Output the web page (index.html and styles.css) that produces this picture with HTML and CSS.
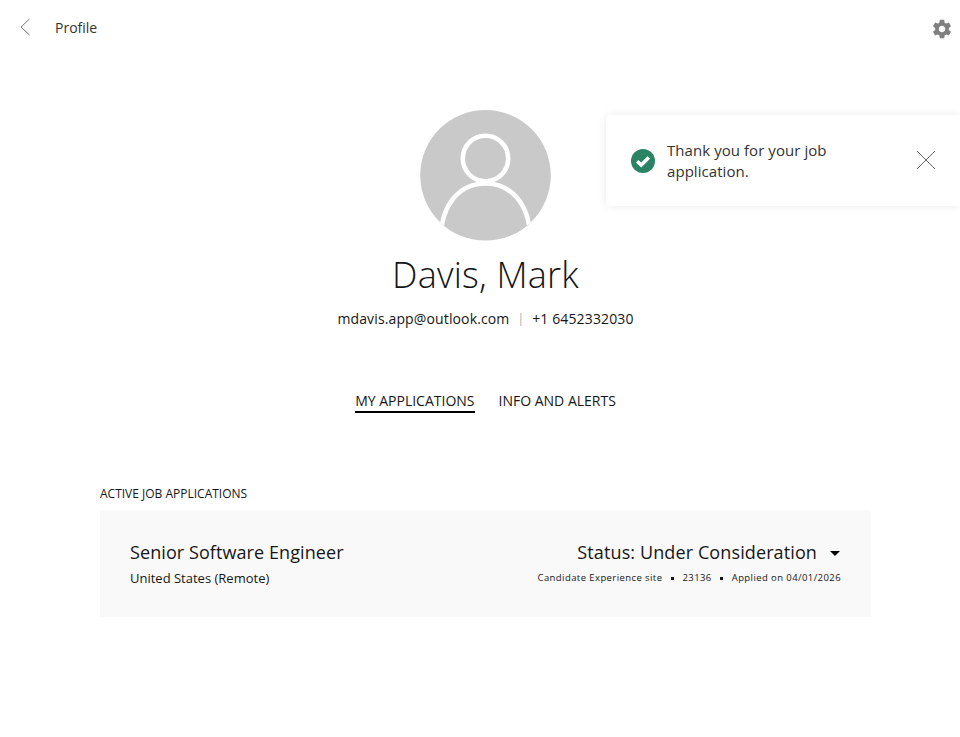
FILE: index.html
```html
<!DOCTYPE html>
<html lang="en">
<head>
<meta charset="utf-8">
<title>Profile</title>
<link rel="stylesheet" href="styles.css">
</head>
<body>
<header class="topbar">
  <div class="topbar-left">
    <svg class="back" width="12" height="18" viewBox="0 0 12 18"><path d="M10.5 1 L2 9 L10.5 17" fill="none" stroke="#777" stroke-width="1"/></svg>
    <span class="topbar-title">Profile</span>
  </div>
  <svg class="gear" width="22" height="22" viewBox="0 0 24 24"><path fill="#808080" d="M19.43 12.98c.04-.32.07-.64.07-.98s-.03-.66-.07-.98l2.11-1.65c.19-.15.24-.42.12-.64l-2-3.46c-.12-.22-.39-.3-.61-.22l-2.49 1c-.52-.4-1.08-.73-1.69-.98l-.38-2.65C14.46 2.18 14.25 2 14 2h-4c-.25 0-.46.18-.49.42l-.38 2.65c-.61.25-1.17.59-1.69.98l-2.49-1c-.23-.09-.49 0-.61.22l-2 3.46c-.13.22-.07.49.12.64l2.11 1.65c-.04.32-.07.65-.07.98s.03.66.07.98l-2.11 1.65c-.19.15-.24.42-.12.64l2 3.46c.12.22.39.3.61.22l2.49-1c.52.4 1.08.73 1.69.98l.38 2.65c.03.24.24.42.49.42h4c.25 0 .46-.18.49-.42l.38-2.65c.61-.25 1.17-.59 1.69-.98l2.49 1c.23.09.49 0 .61-.22l2-3.46c.12-.22.07-.49-.12-.64l-2.11-1.65zM12 15.5c-1.93 0-3.5-1.57-3.5-3.5s1.57-3.5 3.5-3.5 3.5 1.57 3.5 3.5-1.57 3.5-3.5 3.5z"/></svg>
</header>

<main class="page">
  <section class="profile">
    <svg class="avatar" width="131" height="131" viewBox="0 0 131 131">
      <defs><clipPath id="avatar-clip"><circle cx="65.500" cy="65.250" r="65.250"/></clipPath></defs>
      <g clip-path="url(#avatar-clip)">
        <rect width="131" height="131" fill="#c9c9c9"/>
        <circle cx="65.500" cy="48.500" r="22.700" fill="#c9c9c9" stroke="#fff" stroke-width="4.600"/>
        <path d="M20.500 128 C22 92 41 73.500 65.500 73.500 C90 73.500 109 92 110.500 128" fill="#c9c9c9" stroke="#fff" stroke-width="4.600"/>
      </g>
    </svg>
    <h1 class="name">Davis, Mark</h1>
    <p class="contact"><span>mdavis.app@outlook.com</span><span class="sep">|</span><span>+1 6452332030</span></p>
  </section>

  <nav class="tabs">
    <a class="tab tab-active">MY APPLICATIONS</a>
    <a class="tab">INFO AND ALERTS</a>
  </nav>

  <section class="applications">
    <h2 class="section-label">ACTIVE JOB APPLICATIONS</h2>
    <article class="card">
      <div class="card-left">
        <div class="job-title">Senior Software Engineer</div>
        <div class="job-location">United States (Remote)</div>
      </div>
      <div class="card-right">
        <div class="status">Status: Under Consideration<span class="caret"></span></div>
        <div class="meta"><span>Candidate Experience site</span><span class="dot"></span><span>23136</span><span class="dot"></span><span>Applied on 04/01/2026</span></div>
      </div>
    </article>
  </section>
</main>

<aside class="toast">
  <svg class="toast-icon" width="24" height="24" viewBox="0 0 24 24">
    <circle cx="12" cy="12" r="12" fill="#2a8463"/>
    <path d="M6.200 12.300 L10.200 16.100 L17.800 8.500" fill="none" stroke="#fff" stroke-width="3.500"/>
  </svg>
  <p class="toast-text">Thank you for your job application.</p>
  <svg class="toast-close" width="20" height="20" viewBox="0 0 20 20"><path d="M1 1 L19 19 M19 1 L1 19" stroke="#666" stroke-width="1" fill="none"/></svg>
</aside>
</body>
</html>
```

FILE: styles.css
```css
* { box-sizing: border-box; }
html, body { margin: 0; padding: 0; }
body {
  font-family: "Open Sans", "Noto Sans", sans-serif;
  color: #161616;
  background: #fff;
  height: 737px;
  overflow: hidden;
}
.topbar {
  height: 55px;
  display: flex;
  justify-content: space-between;
  align-items: center;
  padding: 3px 7px 0 19px;
}
.topbar-left { display: flex; align-items: center; gap: 24px; }
.back { display: block; margin-top: -4px; }
.topbar-title { font-size: 14px; color: #333; margin-top: -3px; }
.gear { display: block; }

.page { padding: 55px 89px 0 100px; }
.profile { display: flex; flex-direction: column; align-items: center; }
.avatar { display: block; }
.name {
  margin: 8px 0 0;
  font-size: 36px;
  font-weight: 300;
  line-height: 52px;
  letter-spacing: 0.2px;
  color: #161616;
}
.contact {
  margin: 8px 0 0;
  font-size: 14px;
  line-height: 20px;
  letter-spacing: 0.13px;
  display: flex;
  align-items: center;
}
.sep { color: #aaa; margin: 0 8px; font-size: 12px; }

.tabs {
  margin-top: 62px;
  display: flex;
  justify-content: center;
  gap: 24px;
}
.tab {
  font-size: 14px;
  line-height: 20px;
  border-bottom: 2px solid transparent;
  color: #161616;
}
.tab-active { border-bottom-color: #000; }

.applications { margin-top: 72px; }
.section-label {
  margin: 0;
  font-size: 12px;
  font-weight: 400;
  line-height: 18px;
  color: #161616;
}
.card {
  margin-top: 7px;
  height: 107px;
  background: #f9f9f9;
  padding: 30px 30px 0;
  display: flex;
  justify-content: space-between;
}
.job-title { font-size: 18px; line-height: 25px; letter-spacing: 0.08px; }
.job-location { font-size: 13px; line-height: 18px; margin-top: 4px; }
.card-right { display: flex; flex-direction: column; align-items: flex-end; }
.status { font-size: 18px; line-height: 25px; letter-spacing: 0.11px; display: flex; align-items: center; }
.caret {
  margin: 2px 1px 0 13px;
  border-left: 5px solid transparent;
  border-right: 5px solid transparent;
  border-top: 5px solid #000;
}
.meta {
  font-size: 9.500px;
  letter-spacing: 0.42px;
  line-height: 14px;
  margin-top: 6px;
  display: flex;
  align-items: center;
}
.dot {
  width: 3px;
  height: 3px;
  background: #161616;
  margin: 0 8.500px;
}

.toast {
  position: absolute;
  top: 115px;
  left: 606px;
  right: 0;
  height: 91px;
  background: #fff;
  border-radius: 4px 0 0 4px;
  box-shadow: 0 0 10px rgba(0, 0, 0, 0.08);
  display: flex;
  align-items: center;
  padding: 0 24px 0 25px;
}
.toast-icon { flex: none; }
.toast-text {
  margin: 0 0 0 12px;
  width: 190px;
  font-size: 15px;
  line-height: 21px;
  letter-spacing: 0.06px;
  color: #333;
}
.toast-close { flex: none; margin: -2px 0 0 auto; }
```
